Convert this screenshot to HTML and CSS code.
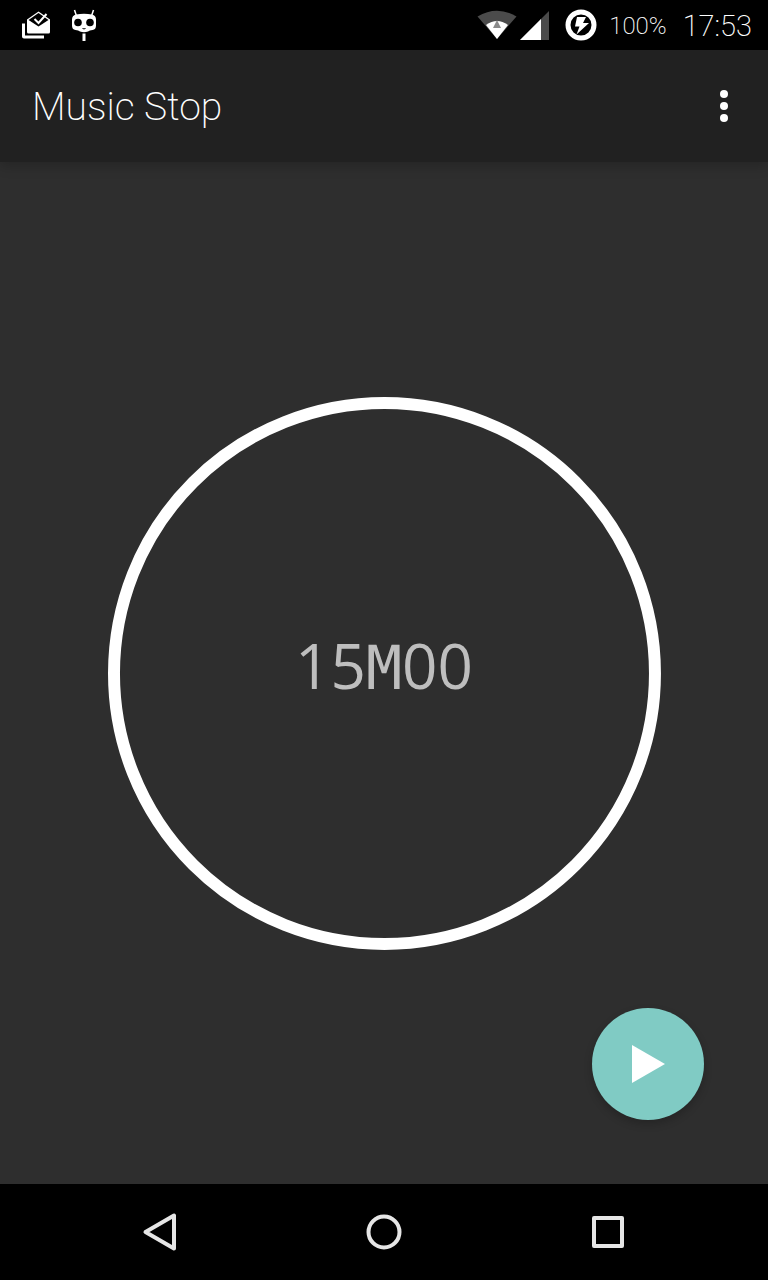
FILE: index.html
```html
<!DOCTYPE html>
<html lang="en">
<head>
<meta charset="utf-8">
<meta name="viewport" content="width=device-width, initial-scale=1">
<title>Music Stop</title>
<link rel="stylesheet" href="styles.css">
</head>
<body>
<div class="screen">
  <div class="status">
    <svg class="status-inbox" width="30" height="30" viewBox="0 0 30 30" aria-hidden="true">
      <path d="M1 13.500h3V25.500h19v3H3a2 2 0 0 1-2-2z" fill="#fff"/>
      <path d="M6 9.500l11.500-8 11.500 8v12.500a1.500 1.500 0 0 1-1.500 1.500h-20A1.500 1.500 0 0 1 6 22z" fill="#fff"/>
      <path d="M7.500 10L17.500 3l10 7-10 6.500z" fill="#000"/>
      <path d="M13.500 9l4 4 8-9" fill="none" stroke="#fff" stroke-width="2"/>
    </svg>
    <svg class="status-cid" width="26" height="34" viewBox="0 0 26 34" aria-hidden="true">
      <path d="M3.500 2l2 6M22.500 2l-2 6" stroke="#fff" stroke-width="1.500"/>
      <path d="M5 6.500q8-1.500 16 0 4 1 4 5v6q0 4-3.500 4.500-3 .3-4.500 1.500-4 1.500-8 0-1.500-1.200-4.500-1.500Q1 21.500 1 17.500v-6q0-4 4-5z" fill="#fff"/>
      <circle cx="7" cy="14.500" r="3.800" fill="#000"/><circle cx="19" cy="14.500" r="3.800" fill="#000"/>
      <path d="M11.500 20.500q1.500.8 3 0" stroke="#000" fill="none"/>
      <path d="M13 25.500v7.500" stroke="#fff" stroke-width="3"/>
    </svg>
    <span class="spacer"></span>
    <svg class="status-wifi" width="40" height="30" viewBox="0 0 40 30" aria-hidden="true">
      <path d="M0.500 6.500Q20-5 39.500 6.500L20 29z" fill="#4b4b4b"/>
      <path d="M9 15Q20 7 31 15L20 29z" fill="#fff"/>
      <path d="M20 10l4 8h-8z" fill="#8a8a8a"/>
    </svg>
    <svg class="status-signal" width="29" height="29" viewBox="0 0 29 29" aria-hidden="true">
      <path d="M0 29L29 0v29z" fill="#4b4b4b"/><path d="M0 29L21 8v21z" fill="#fff"/>
    </svg>
    <svg class="status-battery" width="32" height="32" viewBox="0 0 32 32" aria-hidden="true">
      <circle cx="16" cy="16" r="13" fill="none" stroke="#fff" stroke-width="5"/>
      <path d="M12 8h9l-3 6h6L11.500 25.500l3-8H10z" fill="#fff"/>
    </svg>
    <span class="percent">100%</span>
    <span class="clock">17:53</span>
  </div>
  <header class="appbar">
    <h1 class="title">Music Stop</h1>
    <button class="more" type="button" aria-label="More options">
      <svg width="8" height="32" viewBox="0 0 8 32"><g fill="#fff"><circle cx="4" cy="4" r="4"/><circle cx="4" cy="16" r="4"/><circle cx="4" cy="28" r="4"/></g></svg>
    </button>
  </header>
  <main class="content">
    <div class="dial">
      <svg class="ring" viewBox="0 0 554 554" aria-hidden="true"><circle cx="277" cy="277" r="271" fill="none" stroke="#fff" stroke-width="12"/></svg>
      <div class="time">15<span class="unit">M</span>00</div>
    </div>
    <button class="play" type="button" aria-label="Play">
      <svg width="34" height="38" viewBox="0 0 34 38"><path d="M1 0l33 19L1 38z" fill="#fff"/></svg>
    </button>
  </main>
  <nav class="navbar">
    <button class="nav" type="button" aria-label="Back"><svg width="40" height="40" viewBox="0 0 40 40"><path d="M5.500 20L34 3.500v33z"/></svg></button>
    <button class="nav" type="button" aria-label="Home"><svg width="40" height="40" viewBox="0 0 40 40"><circle cx="20" cy="20" r="15.500"/></svg></button>
    <button class="nav" type="button" aria-label="Recents"><svg width="40" height="40" viewBox="0 0 40 40"><rect x="6" y="6" width="28" height="28"/></svg></button>
  </nav>
</div>
</body>
</html>
```

FILE: styles.css
```css
* { box-sizing: border-box; }
body {
  margin: 0;
  background: #2e2e2e;
  color: #fff;
  font-family: Roboto, Inter, sans-serif;
}
button { border: 0; padding: 0; background: none; cursor: pointer; }
svg { display: block; flex: none; }
.screen { display: flex; flex-direction: column; min-height: 100vh; }
.status {
  display: flex;
  align-items: center;
  height: 50px;
  padding: 0 16px 0 21px;
  background: #000;
  font-weight: 200;
}
.status-cid { margin-left: 20px; }
.spacer { flex: 1; }
.status-signal { margin-left: 3px; }
.status-battery { margin: 0 12px 0 16px; }
.percent { padding-top: 2px; font-size: 24px; }
.clock { margin-left: 16px; padding-top: 2px; font-size: 29px; }
.appbar {
  display: flex;
  align-items: center;
  justify-content: space-between;
  height: 112px;
  padding: 0 16px 0 32px;
  background: #212121;
  box-shadow: 0 4px 12px rgba(0, 0, 0, 0.2);
}
.title { margin: 0; padding-top: 2px; font-size: 39px; font-weight: 200; }
.more { display: flex; justify-content: center; width: 56px; padding: 12px 0; }
.content {
  position: relative;
  flex: 1;
  display: flex;
  align-items: center;
  justify-content: center;
  min-height: 700px;
}
.dial {
  display: grid;
  place-items: center;
  width: 72%;
}
.ring, .time { grid-area: 1 / 1; }
.ring { width: 100%; overflow: visible; }
.time {
  padding-bottom: 16px;
  color: #bebebe;
  font: 62px/84px "Open Sans", "Noto Sans", sans-serif;
}
.unit { font-family: "DejaVu Sans Mono", monospace; font-size: 60px; line-height: 60px; }
.play {
  position: absolute;
  right: 64px;
  bottom: 64px;
  display: grid;
  place-items: center;
  width: 112px;
  height: 112px;
  border-radius: 50%;
  background: #80cbc4;
  box-shadow: 0 4px 8px rgba(0, 0, 0, 0.2);
}
.navbar {
  display: flex;
  justify-content: center;
  height: 96px;
  background: #000;
}
.nav { display: grid; place-items: center; width: 224px; }
.nav svg { fill: none; stroke: #e6e6e6; stroke-width: 4; stroke-linejoin: round; }
```
